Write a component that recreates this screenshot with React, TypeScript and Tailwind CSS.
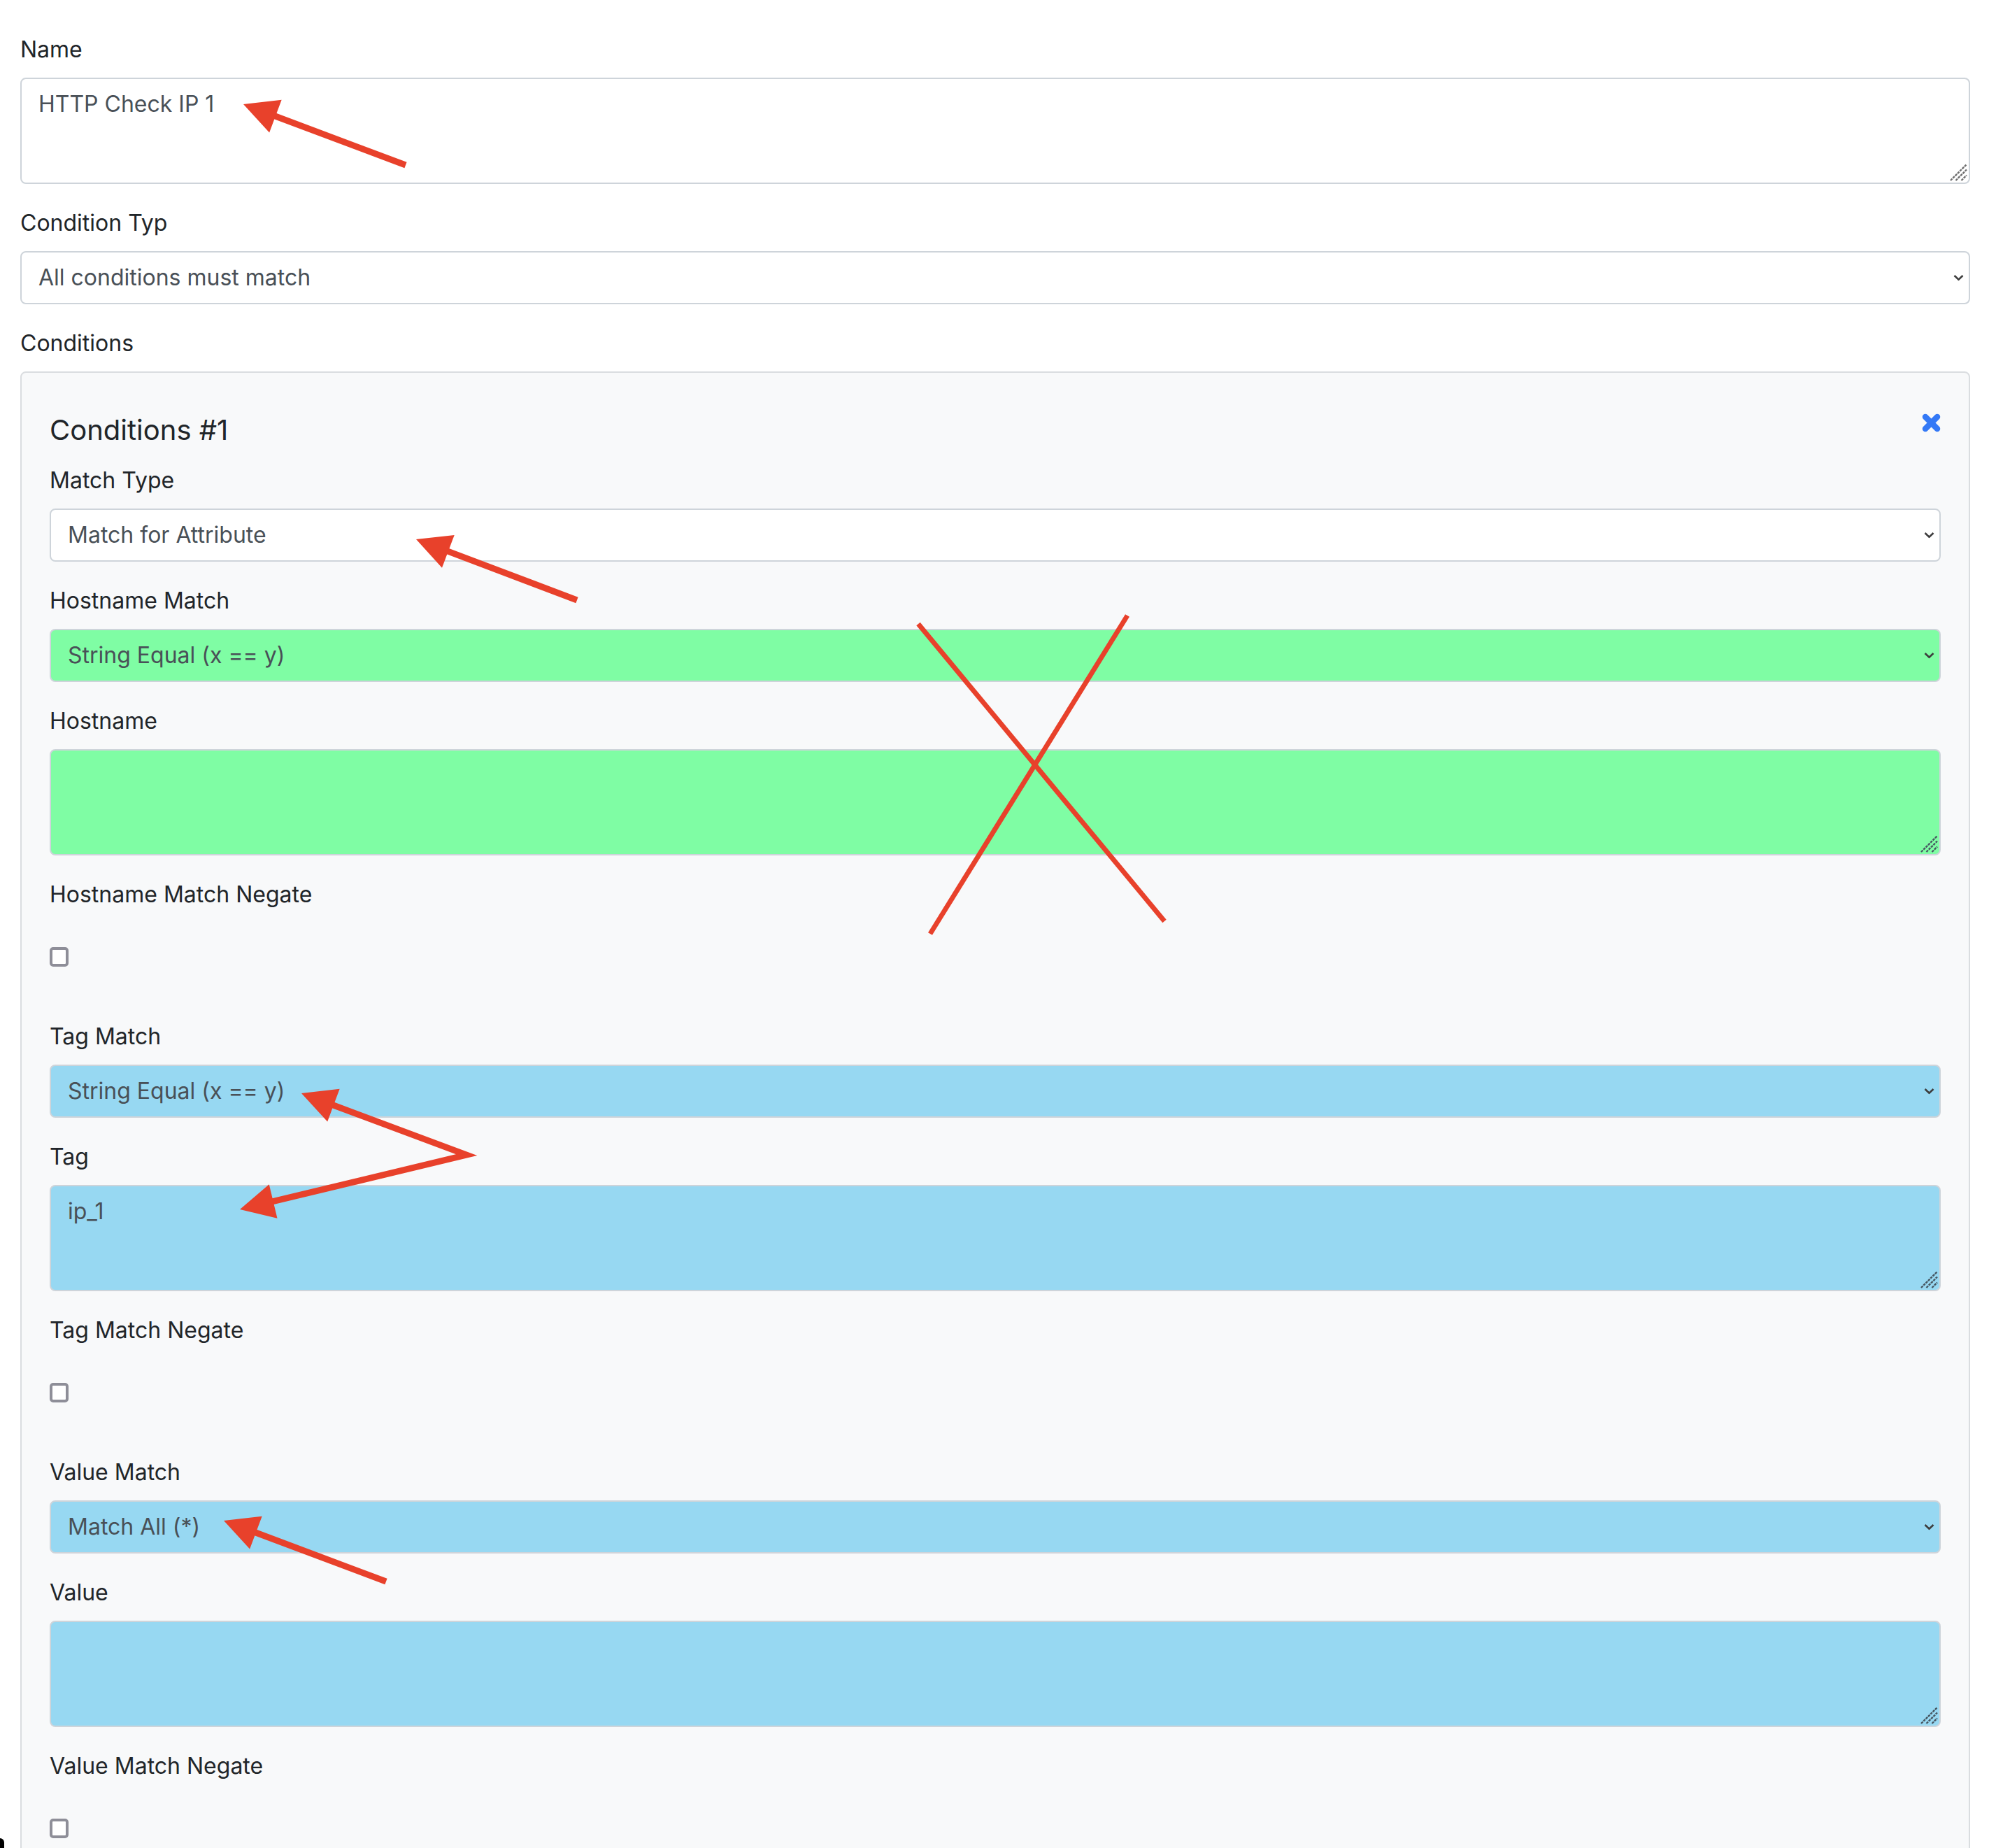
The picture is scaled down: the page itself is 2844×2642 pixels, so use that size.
type Pt = { x: number; y: number };

const RED = "#e8412b";

const FONT = { fontFamily: "Inter, 'Noto Sans', sans-serif" };

function Label({ children }: { children: React.ReactNode }) {
  return (
    <label className="block mb-[16px] text-[32px] leading-[48px] text-[#212529]">
      {children}
    </label>
  );
}

function Chevron() {
  return (
    <svg
      className="absolute right-[9px] top-1/2 -translate-y-1/2 pointer-events-none"
      width="15"
      height="9"
      viewBox="0 0 15 9"
    >
      <path d="M1.5 1.5 L7.5 7.2 L13.5 1.5" fill="none" stroke="#3d3d3d" strokeWidth="2.6" />
    </svg>
  );
}

function Grip({ dark }: { dark?: boolean }) {
  const c = dark ? "#465560" : "#6e6e6e";
  return (
    <svg className="absolute right-[4px] bottom-[4px] pointer-events-none" width="25" height="25" viewBox="0 0 25 25">
      <path d="M1 24 L24 1 M8.5 24 L24 8.5 M16.5 24 L24 16.5" stroke={c} strokeWidth="2.4" strokeDasharray="3.5 1.2" fill="none" />
    </svg>
  );
}

function CloseIcon() {
  return (
    <svg width="27" height="27" viewBox="0 0 27 27" className="shrink-0">
      <path d="M5 5 L22 22 M22 5 L5 22" stroke="#3479f6" strokeWidth="8.5" strokeLinecap="round" fill="none" />
    </svg>
  );
}

function SelectField({ label, value, bg }: { label: string; value: string; bg: string }) {
  return (
    <div className="mb-[32px]">
      <Label>{label}</Label>
      <div className="relative">
        <select
          value={value}
          onChange={() => {}}
          className={`block w-full h-[76px] appearance-none rounded-[8px] border-2 border-[#ced4da] px-[24px] text-[32px] text-[#495057] outline-none ${bg}`}
          style={FONT}
        >
          <option>{value}</option>
        </select>
        <Chevron />
      </div>
    </div>
  );
}

function TextField({ label, value, bg, dark }: { label: string; value: string; bg: string; dark?: boolean }) {
  return (
    <div className="mb-[32px]">
      <Label>{label}</Label>
      <div className="relative">
        <textarea
          readOnly
          value={value}
          className={`block w-full h-[152px] resize-none rounded-[8px] border-2 border-[#ced4da] px-[24px] py-[12px] text-[32px] leading-[48px] text-[#495057] outline-none ${bg}`}
          style={FONT}
        />
        <Grip dark={dark} />
      </div>
    </div>
  );
}

function CheckField({ label }: { label: string }) {
  return (
    <div className="mb-[32px]">
      <Label>{label}</Label>
      <div className="h-[107px] pt-[35px]">
        <span className="block w-[27px] h-[28px] rounded-[5px] border-[4px] border-[#8e8e98] bg-white" />
      </div>
    </div>
  );
}

function Head({ tip, from }: { tip: Pt; from: Pt }) {
  const dx = from.x - tip.x;
  const dy = from.y - tip.y;
  const len = Math.hypot(dx, dy);
  const ux = dx / len;
  const uy = dy / len;
  const bx = tip.x + ux * 49;
  const by = tip.y + uy * 49;
  return (
    <polygon
      points={`${tip.x},${tip.y} ${bx - uy * 25},${by + ux * 25} ${bx + uy * 25},${by - ux * 25}`}
      fill={RED}
    />
  );
}

// point at distance d from a towards b
function along(a: Pt, b: Pt, d: number) {
  const l = Math.hypot(b.x - a.x, b.y - a.y);
  return `${a.x + ((b.x - a.x) / l) * d},${a.y + ((b.y - a.y) / l) * d}`;
}

function Arrow({ tip, tail }: { tip: Pt; tail: Pt }) {
  return (
    <g>
      <polyline points={`${along(tip, tail, 40)} ${tail.x},${tail.y}`} stroke={RED} strokeWidth="9" fill="none" />
      <Head tip={tip} from={tail} />
    </g>
  );
}

function Annotations() {
  const v = { x: 667, y: 1651 };
  const t1 = { x: 431, y: 1563 };
  const t2 = { x: 343, y: 1729 };
  return (
    <svg className="absolute top-0 left-0 pointer-events-none" width="2844" height="2642" viewBox="0 0 2844 2642">
      <Arrow tip={{ x: 348, y: 149 }} tail={{ x: 580, y: 236 }} />
      <Arrow tip={{ x: 595, y: 771 }} tail={{ x: 825, y: 858 }} />
      <Arrow tip={{ x: 320, y: 2174 }} tail={{ x: 552, y: 2261 }} />
      <polyline
        points={`${along(t1, v, 40)} ${v.x},${v.y} ${along(t2, v, 40)}`}
        fill="none"
        stroke={RED}
        strokeWidth="9"
        strokeLinejoin="miter"
      />
      <Head tip={t1} from={v} />
      <Head tip={t2} from={v} />
      <line x1="1313" y1="892" x2="1665" y2="1317" stroke={RED} strokeWidth="7" />
      <line x1="1612" y1="880" x2="1330" y2="1335" stroke={RED} strokeWidth="7" />
    </svg>
  );
}

export default function App() {
  return (
    <div className="relative w-[2844px] h-[2642px] overflow-hidden bg-white" style={FONT}>
      <div className="pl-[29px] pr-[27px] pt-[47px]">
        <TextField label="Name" value="HTTP Check IP 1" bg="bg-white" />
        <SelectField label="Condition Typ" value="All conditions must match" bg="bg-white" />

        <Label>Conditions</Label>
        <div className="rounded-[8px] border-2 border-[#dadde0] bg-[#f8f9fa] px-[40px] pt-[58px] pb-[200px]">
          <div className="flex items-start justify-between mb-[24px]">
            <h5 className="text-[40px] leading-[48px] font-normal text-[#212529]">Conditions #1</h5>
            <CloseIcon />
          </div>

          <SelectField label="Match Type" value="Match for Attribute" bg="bg-white" />
          <SelectField label="Hostname Match" value="String Equal (x == y)" bg="bg-[#7ffda4]" />
          <TextField label="Hostname" value="" bg="bg-[#7ffda4]" dark />
          <CheckField label="Hostname Match Negate" />

          <SelectField label="Tag Match" value="String Equal (x == y)" bg="bg-[#97d8f2]" />
          <TextField label="Tag" value="ip_1" bg="bg-[#97d8f2]" dark />
          <CheckField label="Tag Match Negate" />

          <SelectField label="Value Match" value="Match All (*)" bg="bg-[#97d8f2]" />
          <TextField label="Value" value="" bg="bg-[#97d8f2]" dark />
          <CheckField label="Value Match Negate" />
        </div>
      </div>

      <Annotations />
      <span className="absolute left-0 bottom-0 w-[6px] h-[14px] rounded-tr-full bg-black" />
    </div>
  );
}
